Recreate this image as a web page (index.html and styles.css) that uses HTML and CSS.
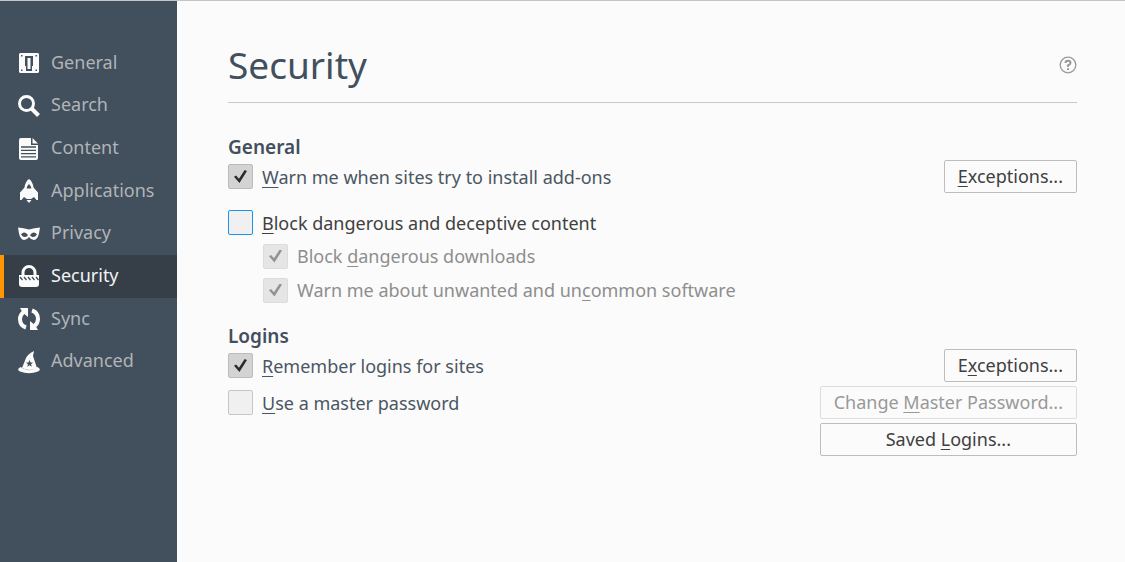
FILE: index.html
```html
<!DOCTYPE html>
<html lang="en">
<head>
<meta charset="utf-8">
<title>Security</title>
<link rel="stylesheet" href="styles.css">
</head>
<body>
<div class="page">
  <nav class="sidebar">
    <a class="item" href="#general"><svg class="icon" viewBox="0 0 22 22"><path fill-rule="evenodd" d="M2 1h18l1 1v18l-1 1H2l-1-1V2zM7 4v10h1v5h6v-5h1V4zM3 3v1.500h1.500V3zM17.500 3v1.500H19V3zM3 17.500V19h1.500v-1.500zM17.500 17.500V19H19v-1.500z"/><path d="M9.500 6h3v11h-3z"/></svg><span class="name">General</span></a>
    <a class="item" href="#search"><svg class="icon" viewBox="0 0 22 22"><circle class="line" cx="8.500" cy="8.500" r="7"/><path class="line thick" d="M13.500 13.500l7 7"/></svg><span class="name">Search</span></a>
    <a class="item" href="#content"><svg class="icon" viewBox="0 0 22 22"><path d="M3 0h10v7h7v13q0 2-2 2H3q-2 0-2-2V2q0-2 2-2zM14.500 0L20 5.500h-5.500z"/><path class="cut" d="M3 9h15M3 12.300h15M3 15.600h15M3 18.900h15"/></svg><span class="name">Content</span></a>
    <a class="item" href="#applications"><svg class="icon" viewBox="0 0 22 22"><path fill-rule="evenodd" d="M11 -1q3.500 2 4.500 8.500l4.500 5V20h-1.500L16 17l-3 2H9l-3-2-2.500 3H2v-7.500l4.500-5Q7.500 1 11-1zM11 4Q9 5.500 8.500 8.500h5Q13 5.500 11 4z"/><path d="M8.500 20h5L11 23z"/></svg><span class="name">Applications</span></a>
    <a class="item" href="#privacy"><svg class="icon" viewBox="0 0 22 22"><path fill-rule="evenodd" d="M0 4.500q5.500.5 11 2 5.500-1.500 11-2-.5 3-1 6Q19.500 17 16 17q-3 0-5-3-2 3-5 3-3.500 0-5-6.500Q.5 7.500 0 4.500zM3 11.500q2 3 4.500 2.500 2-.5 2.500-2Q6 7.500 3 11.500zM12 12q.5 1.500 2.500 2 2.500.5 4.500-2.500-3-4-7 .5z"/></svg><span class="name">Privacy</span></a>
    <a class="item selected" href="#security" aria-current="page"><svg class="icon" viewBox="0 0 22 22"><path class="line" d="M5 11V7.500a6 6 0 0 1 12 0V11"/><path d="M1 10h20v9q0 3-3 3H4q-3 0-3-3z"/><path class="cut" d="M2 12l2.500 3M6 12l2.500 3M10 12l2.500 3M14 12l2.500 3M18 12l2.500 3"/></svg><span class="name">Security</span></a>
    <a class="item" href="#sync"><svg class="icon" viewBox="0 0 22 22"><path class="line thick" d="M8 19.500Q2 17.500 2 11q0-4 3.500-7M14 2.500Q20 4.500 20 11q0 4-3.500 7"/><path d="M2 0h8v9L7 6.500 5 5zM20 22h-8v-9l3 2.500 2 1.500z"/></svg><span class="name">Sync</span></a>
    <a class="item" href="#advanced"><svg class="icon" viewBox="0 0 22 22"><path fill-rule="evenodd" d="M16 0l-1 5 4 12q-7 4-15 0L8 7q2-4 8-7zM11.500 9l-1 2.500H8l2 1.700-.8 2.600 2.300-1.500 2.300 1.500-.8-2.600 2-1.700h-2.500z"/><path d="M2.500 16q9 6.500 17 0 4.500 2.500.5 4.500-9 3.500-18 0-4-2 .5-4.500z"/></svg><span class="name">Advanced</span></a>
  </nav>
  <main class="main">
    <header class="header">
      <h1 class="title">Security</h1>
      <button class="help" type="button" aria-label="Help"><svg class="help-icon" viewBox="0 0 18 18"><circle cx="9" cy="9" r="7.800"/><path class="mark" d="M6.500 7Q6.500 4.700 9 4.700T11.500 7Q11.500 8.300 9 9.500V11M9 12.300V14"/></svg></button>
    </header>
    <section class="group">
      <h2 class="heading">General</h2>
      <div class="row">
        <label class="option"><input class="box" type="checkbox" checked><span><u>W</u>arn me when sites try to install add-ons</span></label>
        <button class="button" type="button"><u>E</u>xceptions...</button>
      </div>
      <div class="blocking">
        <label class="option active"><input class="box" type="checkbox"><span><u>B</u>lock dangerous and deceptive content</span></label>
        <label class="option sub"><input class="box" type="checkbox" checked disabled><span>Block <u>d</u>angerous downloads</span></label>
        <label class="option sub"><input class="box" type="checkbox" checked disabled><span>Warn me about unwanted and un<u>c</u>ommon software</span></label>
      </div>
    </section>
    <section class="group">
      <h2 class="heading">Logins</h2>
      <div class="row">
        <label class="option"><input class="box" type="checkbox" checked><span><u>R</u>emember logins for sites</span></label>
        <button class="button" type="button">E<u>x</u>ceptions...</button>
      </div>
      <div class="row">
        <label class="option"><input class="box" type="checkbox"><span><u>U</u>se a master password</span></label>
        <div class="stack">
          <button class="button" type="button" disabled>Change <u>M</u>aster Password...</button>
          <button class="button" type="button">Saved <u>L</u>ogins...</button>
        </div>
      </div>
    </section>
  </main>
</div>
</body>
</html>
```
FILE: styles.css
```css
* { box-sizing: border-box; }
body {
  margin: 0;
  background: #fbfbfb;
  color: #4a5663;
  font: 18px/24px "Noto Sans", "Open Sans", sans-serif;
}
.page {
  display: flex;
  min-height: 100vh;
  border-top: 1px solid #c4c5c6;
}
.sidebar {
  display: grid;
  grid-template-rows: repeat(8, 1fr);
  flex: none;
  width: 177px;
  padding: 41px 0 179px;
  background: #424f5c;
}
.item {
  display: flex;
  align-items: center;
  gap: 11px;
  padding-left: 18px;
  color: #b0b4b8;
  text-decoration: none;
}
.name { padding-bottom: 3px; }
.selected {
  padding-left: 14px;
  border-left: 4px solid #ff9500;
  background: #363f48;
  color: #f2f3f4;
}
.icon {
  width: 22px;
  height: 22px;
  overflow: visible;
  fill: #fbfbfb;
}
.line { fill: none; stroke: #fbfbfb; stroke-width: 3; }
.thick { stroke-width: 4; }
.cut { fill: none; stroke: #424f5c; stroke-width: 1.3; }
.main {
  flex: 1;
  padding: 37px 48px 40px 51px;
}
.header {
  display: flex;
  align-items: center;
  justify-content: space-between;
  padding-bottom: 10px;
  margin-bottom: 32px;
  border-bottom: 1px solid #c8c8c8;
}
.title {
  margin: 0;
  color: #424f5c;
  font-size: 37px;
  font-weight: 400;
  line-height: 54px;
}
.help { display: flex; padding: 0; border: 0; background: none; }
.help-icon { width: 18px; height: 18px; fill: none; stroke: #999; stroke-width: 1.3; }
.mark { stroke-width: 2; }
.group { margin-bottom: 17px; }
.heading {
  margin: 0 0 1px;
  color: #424f5c;
  font-size: 19px;
  font-weight: 600;
  line-height: 24px;
}
.row {
  display: flex;
  align-items: flex-start;
  justify-content: space-between;
  margin-bottom: 4px;
}
.option {
  display: flex;
  align-items: center;
  gap: 9px;
  height: 33px;
}
.option u, .button u { text-underline-offset: 3px; text-decoration-thickness: 1px; text-decoration-skip-ink: none; }
.blocking { margin-top: 13px; }
.active { color: #404040; }
.sub { height: 34px; padding-left: 35px; color: #8e8e8e; }
.box {
  appearance: none;
  display: grid;
  place-items: center;
  flex: none;
  width: 25px;
  height: 25px;
  margin: 0;
  border: 1px solid #c6c6c6;
  border-radius: 2px;
  background: #f0f0f0;
}
.box:checked { border-color: #bcbcbc; background: #d3d3d3; }
.box:checked::before {
  content: "";
  width: 13px;
  height: 13px;
  background: #2b2b2b;
  clip-path: polygon(0 52%, 16% 42%, 38% 68%, 82% 0, 100% 8%, 42% 100%);
}
.active .box { border-color: #1a94e6; }
.box:disabled { border-color: #dcdcdc; background: #e5e5e5; }
.box:disabled::before { background: #929292; }
.button {
  height: 33px;
  padding: 0 13px 2px;
  border: 1px solid #bdbdbd;
  border-radius: 2px;
  background: #fbfbfb;
  color: #404040;
  font: inherit;
}
.button:disabled { border-color: #dedede; color: #999; }
.stack { display: grid; gap: 4px; }
```
